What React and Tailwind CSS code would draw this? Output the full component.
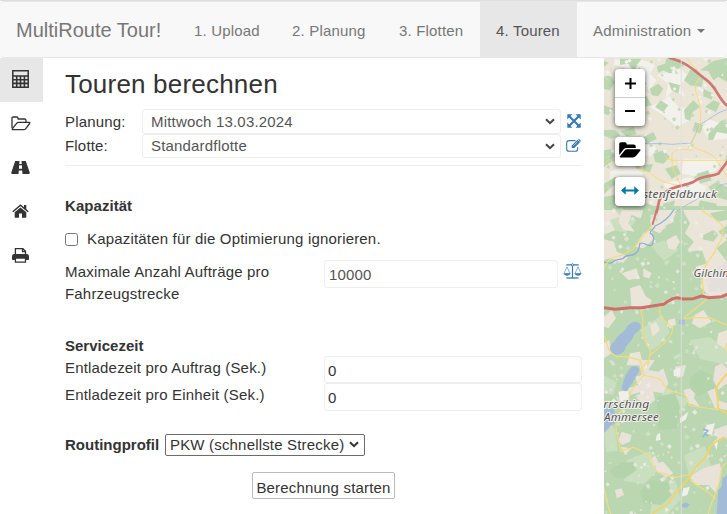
import React from "react";

const svgBase = { fill: "none", stroke: "currentColor" };

function CalculatorIcon() {
  return (
    <svg width="17" height="18" viewBox="0 0 17 18" {...svgBase}>
      <path d="M.8.8h15.400v16.400H.8z" strokeWidth="1.500" />
      <path d="M1 6h15M1 9.700h15M1 13.400h15M4.700 6v11M8.500 6v11M12.400 6v11" strokeWidth="1.600" />
    </svg>
  );
}

function FolderOutlineIcon() {
  return (
    <svg width="20" height="15" viewBox="0 0 20 15" {...svgBase} strokeWidth="1.3" strokeLinejoin="round">
      <path d="M1 12V2.2Q1 1 2.200 1H5.800Q7 1 7 2.200V3H13.500Q15 3 15 4.500V6" />
      <path d="M1.300 12.800 5.600 7.300Q6.400 6.300 7.700 6.300H18Q19.400 6.300 18.600 7.500L14.800 12.600Q14 13.700 12.600 13.700H2.200Q.9 13.700 1.300 12.800Z" />
    </svg>
  );
}

function RoadIcon() {
  return (
    <svg width="19" height="13" viewBox="0 0 19 13" fill="currentColor">
      <path d="M4.200 0H8.500L8.200 3H10.800L10.500 0H14.800L18.700 11.600Q19 13 18 13H11.500L11.200 9.500H7.800L7.500 13H1Q0 13 .3 11.600ZM8.100 4.200 7.900 7.800H11.100L10.900 4.200Z" fillRule="evenodd" />
    </svg>
  );
}

function HomeIcon() {
  return (
    <svg width="17" height="14" viewBox="0 0 17 14" fill="currentColor">
      <path d="M8.500 3.500 14.300 8.300V13Q14.300 13.700 13.600 13.700H10V9.600H7V13.700H3.400Q2.700 13.700 2.700 13V8.300Z" />
      <path d="M.8 7.800 8.500 1.300 16.200 7.800" fill="none" stroke="currentColor" strokeWidth="1.500" />
      <path d="M12 1H14.300V5.700L12 3.800Z" />
    </svg>
  );
}

function PrintIcon() {
  return (
    <svg width="17" height="15" viewBox="0 0 17 15" fill="currentColor">
      <path d="M3.400 7V.7H10.900L13.500 3.300V7M10.500.7V3.700H13.500M3.400 10V14.200H13.500V10Z" fill="none" stroke="currentColor" strokeWidth="1.300" />
      <path d="M2.200 6H14.800Q17 6 17 8.200V11.300Q17 12 16.200 12H14V10H3V12H.8Q0 12 0 11.300V8.200Q0 6 2.200 6Z" />
    </svg>
  );
}

function ExpandIcon() {
  return (
    <svg width="14" height="14" viewBox="0 0 14 14" fill="currentColor">
      <path d="M.3.3H5.400L.3 5.400ZM13.700.3V5.400L8.600.3ZM.3 13.700V8.600L5.400 13.700ZM13.700 13.700H8.600L13.700 8.600Z" />
      <path d="M2 2 12 12M12 2 2 12" stroke="currentColor" strokeWidth="2.100" />
    </svg>
  );
}

function EditIcon() {
  return (
    <svg width="15" height="13" viewBox="0 0 15 13" fill="currentColor">
      <path d="M9.500 1.600H3.200Q.7 1.600 .7 4V10Q.7 12.300 3.200 12.300H9.200Q11.600 12.300 11.600 10V8.200" fill="none" stroke="currentColor" strokeWidth="1.100" />
      <path d="M11.500.8 14 3.200 8.300 9H5.700V6.500ZM12.100.2Q12.700-.3 13.300.3L14.600 1.500Q15 2.100 14.600 2.600L14.200 3Z" />
      <path d="M7.400 6.700 11.500 2.700" stroke="#fff" strokeWidth=".6" />
    </svg>
  );
}

function ScaleIcon() {
  return (
    <svg width="19" height="16" viewBox="0 0 19 16" {...svgBase}>
      <path d="M3.300 1.900H15.700M9.500 2V15" strokeWidth="1.200" />
      <path d="M3.500 15H15.500" strokeWidth="1.300" />
      <path d="M1 10.500 4 3.800 7 10.500M12 10.500 15 3.800 18 10.500" strokeWidth=".6" />
      <path d="M.4 10.300H7.600Q6.800 12.700 4 12.700T.4 10.300ZM11.400 10.300H18.600Q17.800 12.700 15 12.700T11.400 10.300Z" fill="currentColor" stroke="none" />
      <circle cx="9.500" cy="1.900" r="1.100" fill="#fff" />
    </svg>
  );
}

function FolderSolidIcon() {
  return (
    <svg width="22" height="16" viewBox="0 0 22 16" fill="currentColor">
      <path d="M.2 13V2Q.2.300 1.900.300H6Q7.700.300 7.700 2V2.600H14.500Q16.800 2.600 16.800 4.800V6H7.600Q5.900 6 4.700 7.300Z" />
      <path d="M1 14.200 5.600 8.500Q6.500 7.300 8 7.300H20.500Q22.200 7.300 21.200 8.700L17.400 13.600Q16.200 15.400 14 15.400H1.600Q.1 15.400 1 14.200Z" />
    </svg>
  );
}

function ArrowsIcon() {
  return (
    <svg className="text-[#0078a8]" width="18" height="9" viewBox="0 0 18 9" fill="currentColor">
      <path d="M0 4.500 4.700.3V3.400H13.300V.3L18 4.500 13.300 8.700V5.600H4.700V8.700Z" />
    </svg>
  );
}

function Chevron({ className = "" }) {
  return (
    <svg className={className} width="10" height="7" viewBox="0 0 10 7" fill="none" stroke="currentColor" strokeWidth="2">
      <path d="M1 1.200 5 5.200 9 1.200" />
    </svg>
  );
}

// Deterministic sprinkling of clearings and hamlets over the map
function makeSpecks(count, seed, x0, y0, w, h) {
  let s = seed;
  const next = () => {
    s = (s * 16807) % 2147483647;
    return s / 2147483647;
  };
  return Array.from({ length: count }, () => {
    const x = x0 + next() * w;
    const y = y0 + next() * h;
    const a = 0.8 + next() * 2.6;
    const b = 0.7 + next() * 2;
    return `M${x.toFixed(1)} ${y.toFixed(1)}l${a.toFixed(1)} ${(-b).toFixed(1)} ${b.toFixed(1)} ${a.toFixed(1)} ${(-a).toFixed(1)} ${b.toFixed(1)}z`;
  }).join("");
}
const greenSpecks = makeSpecks(70, 77, 604, 58, 123, 150);
const whiteNorth = makeSpecks(60, 913, 604, 58, 123, 150);
const whiteSouth = makeSpecks(70, 421, 604, 208, 123, 306);
const sandSouth = makeSpecks(80, 5311, 604, 208, 123, 306);
const lightSouth = makeSpecks(130, 871, 604, 208, 123, 306);

function MapView() {
  return (
    <svg className="block h-full w-full" viewBox="604 58 123 456" preserveAspectRatio="none" fill="none" strokeLinejoin="round" strokeLinecap="round">
      <path d="M604 58H727V214H604Z" fill="#ebe5d8" />
      <path d="M604 206H727V514H604Z" fill="#bad7b1" />

      <g transform="translate(600 57) scale(.33333)">
        <g fill="#f3f1ec">
          <path d="M45 5 100 20 120 5 165 25 150 50 170 70 145 100 130 65 95 55 70 30 40 25ZM170 55 235 35 265 55 240 85 255 120 220 100 195 125 205 80ZM150 150 210 120 240 155 280 150 270 190 230 210 190 175ZM60 230 110 250 140 230 170 275 150 300 120 285 100 320 55 300ZM250 305 360 305 350 340 300 360 245 350ZM320 185 381 205V245L330 250 310 220ZM30 345 90 320 130 350 100 380 30 375ZM190 380 270 360 320 390 300 430 220 425Z" />
        </g>
        <g fill="#bad7b1">
          <path d="M60 5H125L110 25 132 45 95 35 85 20 60 24ZM12 10 25 18 12 30ZM170 28 195 20 200 3 240 5 252 28 225 38 235 50 205 48 190 40 175 48ZM340 12 381 3V75L355 60 340 70 325 42 300 40ZM270 40 290 35 310 65 305 90 270 85 252 70ZM150 95 175 80 190 95 175 118 155 115ZM120 115 140 118 155 145 130 150ZM12 60 32 55 44 75 30 100 12 95ZM205 75 240 85 235 110 215 100ZM165 150 182 130 205 145 190 165ZM252 160 280 130 300 150 278 165 270 192 255 185ZM315 150 340 130 360 138 348 165ZM12 145 40 155 25 175 12 170ZM310 95 340 110 335 128 310 118ZM12 220 44 218 62 235 35 245 12 236ZM60 222 100 210 110 230 80 238ZM325 230 365 190 381 198V230L350 225 340 248 325 250ZM285 195 310 205 300 230 278 220ZM130 240 160 225 170 245 140 262ZM160 290 190 280 210 300 190 320 165 315ZM195 335 230 325 242 350 215 365ZM12 280 42 275 40 310 12 330ZM130 325 160 320 150 345 128 342ZM290 350 325 340 335 370 300 380ZM12 380 45 360 75 370 95 400 40 385 12 412ZM325 390 350 375 381 390V430L350 420ZM12 420 50 412 80 430 130 435 180 455V466H12ZM190 440 225 430 220 450 260 466H185ZM300 430 350 440 345 466H290Z" />
        </g>
      </g>
      <path d={greenSpecks} fill="#c3dbb9" />
      <path d={whiteNorth} fill="#f3f1ec" />

      <g fill="#c9dfc0">
        <path d="M604 214 620 208 636 221 626 232 607 230ZM650 245 668 239 679 250 664 261ZM640 330 662 315 670 332 659 346 650 351ZM604 375 617 382 613 395 604 393ZM627 460 650 451 658 470 644 484 624 481ZM604 430 615 428 618 451 606 452ZM684 455 705 446 711 466 690 480ZM663 389 690 400 678 414 660 410ZM655 485 675 480 681 499 668 514H650ZM690 340 710 337 727 350V365L700 359Z" />
      </g>
      <path d={lightSouth} fill="#cce1c4" />

      <g transform="translate(600 210) scale(.33333)">
        <g fill="#ebe4d8">
          <path d="M12 0H45L60 20 30 30 45 60 12 75ZM65 0H130L122 25 95 15 85 40 105 65 70 60 55 35ZM170 0H238L225 35 200 45 180 70 155 60 150 30ZM248 0H381V45L355 65 381 90 350 115 381 155V250L335 265 300 230 315 190 285 200 290 150 262 120 282 95 255 70 270 40ZM130 70 155 60 162 88 130 115 105 110ZM12 88 42 95 50 125 85 140 70 158 30 145 12 150ZM65 190 110 175 118 205 85 210ZM130 175 155 190 148 205 130 200ZM200 90 228 75 240 95 225 120 205 115ZM90 235 120 225 138 260 155 270 145 300 120 290 95 298ZM12 320 35 300 48 325 25 355 12 350ZM285 315 310 300 335 335 300 355 275 340ZM205 330 225 325 228 345 200 350ZM150 345 168 335 180 360 158 380ZM355 370 381 360V420L350 400ZM12 400 28 390 35 430 12 445ZM90 430 120 425 130 466H80Z" />
        </g>
        <path d="M340 180 381 155V245L330 245 320 215Z" fill="#e5dfdb" />
        <g fill="#bad7b1"><path d="M232 0 253 2 238 35 215 75 195 95 188 75 215 38ZM330 10 381 0V30L350 35ZM310 75 340 60 355 75 340 95 308 88ZM270 125 305 120 320 160 290 170ZM160 20 175 10 170 35Z" /></g>
      </g>

      <g transform="translate(600 360) scale(.33333)">
        <g fill="#e9e2d8">
          <path d="M115 0H165L145 30 175 35 190 25 205 70 190 100 160 95 165 120 140 140 110 115 125 95 90 105 85 85 115 75 105 50 125 45ZM225 20 258 15 250 48 230 55ZM250 90 290 80 282 115 300 140 265 130ZM320 90 345 85 352 120 381 130V150L345 145ZM65 215 95 225 90 245 65 255 55 240ZM62 260 95 265 75 285ZM340 210 381 195V230L355 238ZM310 325 360 310 365 340 348 400 325 375 285 375 270 350ZM165 310 190 305 220 340 200 352 170 335ZM45 390 65 385 72 405 50 415ZM345 20 365 10 381 25V70L355 90 340 60ZM150 300 165 285 175 305 160 320Z" />
        </g>
        <g fill="#f1efea"><path d="M55 95 85 90 88 115 60 125ZM220 30 245 20 240 50 222 48ZM170 225 180 218 182 240 167 242ZM240 175 265 155 258 178 240 190ZM320 195 345 190 335 225 310 218ZM340 245 355 235 350 270ZM250 385 270 380 262 405 245 410Z" /></g>
        <path d="M270 55 300 30 335 45 345 85 320 95 295 110 270 85ZM30 330 60 310 100 305 110 330 75 355 40 350ZM120 395 150 360 205 365 215 405 185 435 130 430ZM170 110 225 100 240 140 230 205 175 210Z" fill="#b3d3ab" />
      </g>
      <path d={sandSouth} fill="#e9e3d8" opacity=".8" />
      <path d={whiteSouth} fill="#f0eeea" opacity=".8" />

      {/* Lakes and rivers */}
      <g transform="translate(600 210) scale(.33333)">
        <path d="M98 337C110 332 125 340 122 353 119 365 105 366 100 380 94 397 78 402 75 418 69 432 50 440 37 430 25 418 30 402 45 393 52 373 72 370 80 352 85 342 93 342 98 337Z" fill="#a3bbd7" />
        <path d="M236 332 244 326 256 332 252 345 236 342Z" fill="#a9bfd8" />
        <path d="M221 0C210 18 190 38 165 48 162 60 150 58 151 70 166 77 160 90 157 104 145 115 137 95 120 100 116 112 120 122 106 131 90 142 80 130 70 145 55 152 48 145 38 156 28 165 20 153 12 158" stroke="#8eaed4" strokeWidth="4" />
      </g>
      <g transform="translate(600 360) scale(.33333)">
        <path d="M93 22C105 15 118 20 118 32 113 43 107 46 104 58 99 72 87 78 84 90 78 98 67 92 64 84 70 68 72 52 80 40ZM12 148 42 142 47 190 32 197 12 220ZM381 348 368 353 365 380 355 390 350 462H381ZM246 433 258 427 270 435 259 444 246 440Z" fill="#a3bbd7" />
        <path d="M311 208 324 212 318 218 309 230M315 219 322 227" stroke="#9ab7d8" strokeWidth="5" />
      </g>
      <g transform="translate(600 57) scale(.33333)">
        <path d="M130 260H190L215 262 274 258 300 202C330 188 350 165 381 158M381 380C350 382 355 402 330 405 300 425 260 440 225 466M12 317C30 308 40 290 60 285" stroke="#a2bbdc" strokeWidth="2.500" />
      </g>

      {/* Roads */}
      <g transform="translate(600 57) scale(.33333)">
        <path d="M262 3C270 25 295 30 298 60 290 75 285 85 286 98 292 120 304 135 301 195 300 220 280 240 274 262 290 286 335 280 350 310L381 360M12 320 25 308 60 312C100 325 120 330 160 355 180 375 210 380 242 387M242 386C235 360 215 345 216 310V290C225 275 245 280 250 278 270 272 265 290 280 274M217 310H368C375 310 378 315 381 318M217 310 198 302" stroke="#f4db79" strokeWidth="3" />
        <path d="M210 3C260 18 270 30 318 68 350 90 355 125 381 146M381 315 355 350C330 362 310 352 280 375 240 392 200 385 178 430L170 466" stroke="#cf7772" strokeWidth="8" />
      </g>
      <g transform="translate(600 210) scale(.33333)">
        <path d="M158 42C150 60 128 75 123 88 105 115 90 125 65 136 40 140 25 145 12 176M305 0C325 20 350 20 368 50 375 90 345 110 345 125 325 155 315 160 310 190 300 220 315 230 310 255M120 293C135 325 125 350 130 380 140 405 155 420 150 435L143 466M185 280C170 310 180 325 215 350 225 365 210 390 150 435M325 262C310 280 280 300 262 315 250 320 255 330 262 325 290 320 310 325 330 323 350 328 360 340 381 345M12 375C25 405 20 425 50 440M50 440C80 435 100 448 120 450M381 400C370 408 380 415 381 425" stroke="#f4db79" strokeWidth="3.500" />
        <path d="M170 0 158 42" stroke="#cf7772" strokeWidth="6" />
        <path d="M12 293 46 298 90 293H125L190 283C205 275 210 265 230 263L250 267 280 266 305 258 325 263 365 260 381 253" stroke="#cf6f6a" strokeWidth="9" />
      </g>
      <g transform="translate(600 360) scale(.33333)">
        <path d="M119 0 132 45C110 75 95 80 88 110 80 145 55 155 49 178 42 215 60 250 62 275M132 45C150 53 170 48 185 62 200 95 215 95 245 100 270 110 260 130 270 137 300 142 330 145 355 150M145 0C135 20 110 25 130 40M62 275C75 265 90 268 100 262 120 270 130 275 145 285 170 310 150 325 175 337 200 340 215 355 230 352 240 350 245 345 270 345M381 308C355 320 365 350 355 375 340 425 330 430 325 462M271 360C290 380 325 390 345 415M12 385 25 440 32 462" stroke="#f3dc7c" strokeWidth="3.500" />
        <path d="M381 40C355 75 350 75 348 90 358 110 350 125 355 145L381 162M372 232C345 245 325 255 325 280 295 320 280 320 271 350 245 380 225 395 209 425 190 445 180 440 158 462" stroke="#f2d465" strokeWidth="5.500" />
      </g>
      <path d="M681.300 58V514" stroke="#dfdfdc" strokeWidth="1.200" opacity=".75" />
      <g fontFamily="'Noto Sans', 'Open Sans', sans-serif" fontStyle="italic" fontSize="11.5" fill="#555" stroke="#f4f2ee" strokeWidth="2" paintOrder="stroke">
        <text x="643" y="198" textLength="74" lengthAdjust="spacingAndGlyphs">stenfeldbruck</text>
        <text x="693.500" y="277" textLength="42" lengthAdjust="spacingAndGlyphs">Gilching</text>
        <text x="597" y="408" textLength="52.500" lengthAdjust="spacingAndGlyphs">errsching</text>
        <text x="604" y="421" textLength="55" lengthAdjust="spacingAndGlyphs">Ammersee</text>
      </g>
    </svg>
  );
}

const navItems = [
  { label: "1. Upload", cls: "w-[98px]" },
  { label: "2. Planung", cls: "w-[107px]" },
  { label: "3. Flotten", cls: "w-[97px]" },
  { label: "4. Touren", cls: "w-[97px] bg-[#e7e7e7] text-[#555]" },
];

const sideItems = [CalculatorIcon, FolderOutlineIcon, RoadIcon, HomeIcon, PrintIcon];

function SelectRow({ label, value, icon, height }) {
  return (
    <div className={"flex items-center " + height}>
      <span className="w-[77px]">{label}</span>
      <div className="flex h-full w-[419px] items-center justify-between rounded-[3px] border border-[#eee] pr-[5px] pl-2 text-[#555]">
        <span>{value}</span>
        <Chevron className="text-[#444]" />
      </div>
      <span className="mb-[2px] ml-[5px] flex w-[15px] justify-center text-[#337ab7]">{icon}</span>
    </div>
  );
}

const mapButton = "flex w-[30px] items-center justify-center rounded bg-white text-black shadow-[0_1px_5px_rgba(0,0,0,0.65)]";

export default function App() {
  return (
    <div className="flex h-[514px] w-[727px] flex-col overflow-hidden border-t border-[#ddd] bg-white font-['Liberation_Sans',Arial,sans-serif] text-[15px] leading-[22px] tracking-[0.18px] text-[#333]">
      <nav className="flex h-[57px] shrink-0 rounded border border-x-0 border-[#e7e7e7] bg-[#f8f8f8] text-[#777]">
        <div className="flex w-[178px] shrink-0 items-center pl-[16px] text-[20px] tracking-[0px]">MultiRoute Tour!</div>
        {navItems.map((n) => (
          <a key={n.label} className={"flex shrink-0 items-center pt-0.5 pl-4 " + n.cls}>{n.label}</a>
        ))}
        <a className="flex items-center pt-0.5 pl-4 tracking-[0.24px]">
          Administration
          <span className="ml-[6px] border-x-[4.5px] border-t-[4.5px] border-x-transparent border-t-[#777]" />
        </a>
      </nav>

      <div className="flex min-h-0 flex-1">
        <aside className="w-[43px] shrink-0">
          {sideItems.map((Icon, i) => (
            <div key={i} className={"flex h-11 items-center justify-center pr-[2px] pb-[2px] " + (i === 0 ? "bg-[#e7e7e7]" : "")}>
              <Icon />
            </div>
          ))}
        </aside>

        <main className="w-[561px] shrink-0 pl-[22px]">
          <h1 className="pt-[11px] text-[26px] leading-[30px] tracking-[0.2px]">Touren berechnen</h1>
          <div className="mt-[10px] w-[517px] border-b border-[#eee] pb-[7px]">
            <SelectRow label="Planung:" value="Mittwoch 13.03.2024" icon={<ExpandIcon />} height="h-[25px]" />
            <SelectRow label="Flotte:" value="Standardflotte" icon={<EditIcon />} height="h-[24px]" />
          </div>

          <h2 className="mt-[29px] font-bold tracking-[0.05px]">Kapazität</h2>
          <label className="mt-[11px] flex items-center">
            <span className="mr-[9px] h-[13px] w-[13px] rounded-[2.5px] border border-[#767676]" />
            Kapazitäten für die Optimierung ignorieren.
          </label>
          <div className="mt-[10px] flex">
            <div className="w-[259px] pt-[1px]">Maximale Anzahl Aufträge pro<br />Fahrzeugstrecke</div>
            <div className="flex h-7 w-[234px] items-center rounded-[3px] border border-[#eee] pt-0.5 pl-1 text-[#555]">10000</div>
            <span className="mt-[3px] ml-[5px] text-[#337ab7]"><ScaleIcon /></span>
          </div>

          <h2 className="mt-[30px] mb-[-1px] font-bold tracking-[0px]">Servicezeit</h2>
          <div className="flex">
            <span className="w-[259px] pt-px">Entladezeit pro Auftrag (Sek.)</span>
            <div className="flex h-[27px] w-[258px] items-center rounded-[3px] border border-[#eee] pt-0.5 pl-[3px]">0</div>
          </div>
          <div className="flex">
            <span className="w-[259px] pt-px">Entladezeit pro Einheit (Sek.)</span>
            <div className="flex h-[28px] w-[258px] items-center rounded-[3px] border border-[#eee] pt-0.5 pl-[3px]">0</div>
          </div>

          <div className="mt-[22px] flex items-center">
            <span className="w-[100px] pt-px font-bold tracking-[0px]">Routingprofil</span>
            <div className="flex h-[22px] w-[200px] items-center justify-between rounded-[2px] border border-[#6b6b6b] pr-[5px] pl-1">
              <span className="pt-px">PKW (schnellste Strecke)</span>
              <Chevron />
            </div>
          </div>
          <button className="mt-[16px] ml-[187px] flex h-[27px] w-[143px] items-center justify-center rounded-[2px] border border-[#bbb] pt-1">Berechnung starten</button>
        </main>

        <section className="relative h-[456px] w-[123px] shrink-0 overflow-hidden">
          <MapView />
          <div className="absolute top-[11px] left-[11px] flex flex-col gap-[11px]">
            <div className={mapButton + " h-[57px] flex-col"}>
              <div className="flex h-[29px] w-full items-center justify-center border-b border-[#ccc]">
                <svg width="11" height="11" viewBox="0 0 11 11" stroke="currentColor" strokeWidth="2"><path d="M0 5.500H11M5.500 0V11" /></svg>
              </div>
              <div className="flex h-7 items-center pb-0.5">
                <svg width="10" height="2"><path d="M0 0H10V2H0Z" fill="currentColor" /></svg>
              </div>
            </div>
            <div className={mapButton + " h-[29px] pb-1"}><FolderSolidIcon /></div>
            <div className={mapButton + " h-[29px] pb-0.5"}><ArrowsIcon /></div>
          </div>
        </section>
      </div>
    </div>
  );
}
